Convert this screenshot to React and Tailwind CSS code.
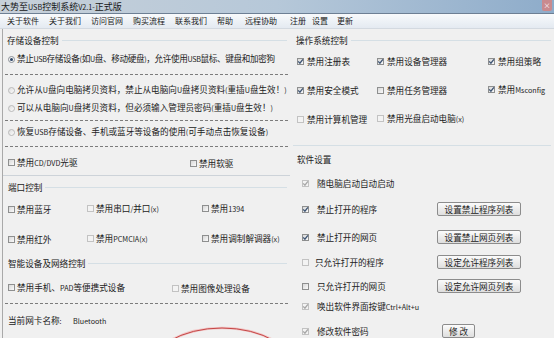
import React from 'react';

// ASCII runs are drawn smaller, like the small Latin of the original font
const T = ({ children, className = '' }) => (
  <span className={`whitespace-nowrap leading-none ${className}`}>
    {String(children)
      .split(/([\x20-\x7E]+)/)
      .filter(Boolean)
      .map((p, i) =>
        /^[\x20-\x7E]+$/.test(p) ? (
          <span key={i} className="text-[7.2px]">
            {p}
          </span>
        ) : (
          <span key={i}>{p}</span>
        )
      )}
  </span>
);

const Check = ({ checked, disabled }) => (
  <span
    className={
      disabled
        ? 'relative inline-block shrink-0 w-[7px] h-[7px] border border-[#c2c2c2] bg-[#f3f3f3]'
        : 'relative inline-block shrink-0 w-[7px] h-[7px] border border-[#8e8f8f] bg-gradient-to-br from-[#d8d8d8] to-[#fafafa]'
    }
  >
    {checked && (
      <svg className="absolute left-[-1px] top-[-1px]" width="7" height="7" viewBox="0 0 7 7">
        <path
          d="M1.2 3.4 L2.9 5.2 L5.9 1.3"
          fill="none"
          stroke={disabled ? '#a6a6a6' : '#3d5473'}
          strokeWidth="1.3"
        />
      </svg>
    )}
  </span>
);

const Radio = ({ on }) => (
  <span
    className={
      on
        ? 'relative inline-flex shrink-0 items-center justify-center w-[7px] h-[7px] rounded-full border border-[#8a8f96] bg-[#f4f4f4]'
        : 'relative inline-flex shrink-0 items-center justify-center w-[7px] h-[7px] rounded-full border border-[#b9b9b9] bg-gradient-to-br from-[#dedede] to-[#fbfbfb]'
    }
  >
    {on && <span className="w-[3px] h-[3px] rounded-full bg-[#2c4466]" />}
  </span>
);

const Dash = ({ h }) => (
  <div className={`flex items-center pl-[2px] pr-[2px] ${h}`}>
    <div className="flex-1 border-t border-dashed border-[#7c7c7c]" />
  </div>
);

const Group = ({ title, className, pl }) => (
  <div className={`flex items-center ${className}`}>
    <T className={pl}>{title}</T>
    <div className="ml-[3px] mr-[3px] flex-1 border-t border-[#d5dfe5]" />
  </div>
);

const Btn = ({ children, w }) => (
  <span
    className={`inline-flex h-[14px] items-center justify-center rounded-[2px] border border-[#8c8c8c] bg-gradient-to-b from-[#fbfbfb] to-[#dedede] leading-none ${w}`}
  >
    {children}
  </span>
);

const menus = [
  ['关于软件', 'ml-[7px]'],
  ['关于我们', 'ml-[10px]'],
  ['访问官网', 'ml-[10px]'],
  ['购买流程', 'ml-[10px]'],
  ['联系我们', 'ml-[10px]'],
  ['帮助', 'ml-[10px]'],
  ['远程协助', 'ml-[12px]'],
  ['注册', 'ml-[13px]'],
  ['设置', 'ml-[6px]'],
  ['更新', 'ml-[9px]'],
];

export default function App() {
  return (
    <div className="relative w-[554px] h-[338px] overflow-hidden bg-[#f0f0f0] text-[8.6px] text-[#222] font-['Noto_Sans_CJK_SC','Liberation_Sans',sans-serif]">
      {/* title bar */}
      <div className="flex h-[14px] items-center border-b border-[#6d7f94] bg-gradient-to-r from-[#c7d0d9] via-[#b6c8d9] to-[#8eacca] text-[9px]">
        <T className="pl-[1px] text-[#161616]">大势至USB控制系统V2.1-正式版</T>
        <div className="flex-1" />
        <span className="mr-[2px] flex h-[11px] w-[10px] items-center justify-center self-start rounded-b-[2px] bg-[#c98a8e] text-[7px] leading-none text-white">
          ×
        </span>
      </div>

      {/* menu bar */}
      <div className="flex h-[15px] items-center border-b border-[#d3d9e0] bg-gradient-to-b from-[#f8fafc] to-[#e4eaf1] text-[8px]">
        {menus.map(([t, m]) => (
          <span key={t} className={`${m} leading-none`}>
            {t}
          </span>
        ))}
      </div>

      <div className="flex">
        {/* left column */}
        <div className="ml-[2px] w-[288px] border-l border-[#a9a9a9]">
          <Group title="存储设备控制" className="h-[22px]" pl="pl-[4px]" />
          <div className="flex h-[16px] items-center gap-[2px] pl-[5px]">
            <Radio on />
            <T className="tracking-[-0.35px]">禁止USB存储设备(如U盘、移动硬盘)，允许使用USB鼠标、键盘和加密狗</T>
          </div>
          <Dash h="h-[14px]" />
          <div className="flex h-[18px] items-center gap-[2px] pl-[5px]">
            <Radio />
            <T>允许从U盘向电脑拷贝资料，禁止从电脑向U盘拷贝资料(重插U盘生效！)</T>
          </div>
          <div className="flex h-[18px] items-center gap-[2px] pl-[5px]">
            <Radio />
            <T>可以从电脑向U盘拷贝资料，但必须输入管理员密码(重插U盘生效！)</T>
          </div>
          <Dash h="h-[6px]" />
          <div className="flex h-[18px] items-center gap-[2px] pl-[5px]">
            <Radio />
            <T>恢复USB存储设备、手机或蓝牙等设备的使用(可手动点击恢复设备)</T>
          </div>
          <Dash h="h-[10px]" />
          <div className="flex h-[25px] items-center border-b border-[#cdd3d9] pl-[5px]">
            <span className="flex w-[182px] items-center gap-[2px]">
              <Check />
              <T>禁用CD/DVD光驱</T>
            </span>
            <span className="flex items-center gap-[2px]">
              <Check />
              <T>禁用软驱</T>
            </span>
          </div>

          <Group title="端口控制" className="h-[22px]" pl="pl-[5px]" />
          <div className="flex h-[22px] items-center pl-[5px]">
            <span className="flex w-[79px] items-center gap-[2px]">
              <Check />
              <T>禁用蓝牙</T>
            </span>
            <span className="flex w-[115px] items-center gap-[2px]">
              <Check disabled />
              <T>禁用串口/并口(x)</T>
            </span>
            <span className="flex items-center gap-[2px]">
              <Check />
              <T>禁用1394</T>
            </span>
          </div>
          <div className="mt-[8px] flex h-[22px] items-center pl-[5px]">
            <span className="flex w-[79px] items-center gap-[2px]">
              <Check />
              <T>禁用红外</T>
            </span>
            <span className="flex w-[115px] items-center gap-[2px]">
              <Check disabled />
              <T>禁用PCMCIA(x)</T>
            </span>
            <span className="flex items-center gap-[2px]">
              <Check />
              <T>禁用调制解调器(x)</T>
            </span>
          </div>

          <Group title="智能设备及网络控制" className="h-[26px]" pl="pl-[5px]" />
          <div className="flex h-[24px] items-center pl-[5px]">
            <span className="flex w-[164px] items-center gap-[2px]">
              <Check />
              <T>禁用手机、PAD等便携式设备</T>
            </span>
            <span className="flex items-center gap-[2px]">
              <Check disabled />
              <T>禁用图像处理设备</T>
            </span>
          </div>
          <Dash h="h-[6px]" />
          <div className="flex h-[30px] items-center pl-[5px]">
            <T className="w-[65px]">当前网卡名称:</T>
            <T>Bluetooth</T>
          </div>
        </div>

        {/* right column */}
        <div className="flex-1">
          <Group title="操作系统控制" className="h-[22px]" pl="pl-[6px]" />
          <div className="mx-[3px] flex flex-col gap-[9px] border-b border-[#d5dfe5] pb-[16px]">
            {[
              [['禁用注册表', true], ['禁用设备管理器', true], ['禁用组策略', true]],
              [['禁用安全模式', true], ['禁用任务管理器', false], ['禁用Msconfig', true]],
              [['禁用计算机管理', false, true], ['禁用光盘启动电脑(x)', false, true]],
            ].map((row, i) => (
              <div key={i} className="flex h-[20px] items-center pl-[4px]">
                {row.map(([t, c, d], j) => (
                  <span
                    key={t}
                    className={
                      j === 0
                        ? 'flex w-[80px] items-center gap-[3px]'
                        : j === 1
                        ? 'flex w-[111px] items-center gap-[3px]'
                        : 'flex items-center gap-[3px]'
                    }
                  >
                    <Check checked={c} disabled={d} />
                    <T>{t}</T>
                  </span>
                ))}
              </div>
            ))}
          </div>

          <div className="flex h-[27px] items-center pl-[7px]">
            <T>软件设置</T>
          </div>
          <div className="flex h-[20px] items-center pl-[12px]">
            <span className="flex w-[135px] items-center gap-[8px]">
              <Check checked disabled />
              <T>随电脑启动自动启动</T>
            </span>
          </div>
          <div className="mt-[6px] flex h-[20px] items-center pl-[12px]">
            <span className="flex w-[135px] items-center gap-[8px]">
              <Check checked />
              <T>禁止打开的程序</T>
            </span>
            <Btn w="w-[84px]">设置禁止程序列表</Btn>
          </div>
          <div className="mt-[8px] flex h-[20px] items-center pl-[12px]">
            <span className="flex w-[135px] items-center gap-[8px]">
              <Check checked />
              <T>禁止打开的网页</T>
            </span>
            <Btn w="w-[84px]">设置禁止网页列表</Btn>
          </div>
          <div className="mt-[5px] flex h-[20px] items-center pl-[12px]">
            <span className="flex w-[135px] items-center gap-[6px]">
              <Check disabled />
              <T>只允许打开的程序</T>
            </span>
            <Btn w="w-[84px]">设定允许程序列表</Btn>
          </div>
          <div className="mt-[4px] flex h-[20px] items-center pl-[12px]">
            <span className="flex w-[135px] items-center gap-[8px]">
              <Check />
              <T>只允许打开的网页</T>
            </span>
            <Btn w="w-[84px]">设定允许网页列表</Btn>
          </div>
          <div className="mt-[1px] flex h-[20px] items-center pl-[12px]">
            <span className="flex w-[135px] items-center gap-[8px]">
              <Check checked disabled />
              <T>唤出软件界面按键Ctrl+Alt+u</T>
            </span>
          </div>
          <div className="mt-[4px] flex h-[20px] items-center pl-[12px]">
            <span className="flex w-[140px] items-center gap-[8px]">
              <Check checked disabled />
              <T>修改软件密码</T>
            </span>
            <Btn w="w-[33px]">修 改</Btn>
          </div>
        </div>
      </div>

      {/* red circle annotation */}
      <svg className="absolute left-[136px] top-[320px]" width="170" height="18" viewBox="0 0 170 18">
        <ellipse cx="86" cy="52" rx="74" ry="44" fill="none" stroke="#f2c4c4" strokeWidth="2.5" />
        <ellipse cx="86" cy="52" rx="74" ry="44" fill="none" stroke="#c44646" strokeWidth="1" />
      </svg>
    </div>
  );
}
